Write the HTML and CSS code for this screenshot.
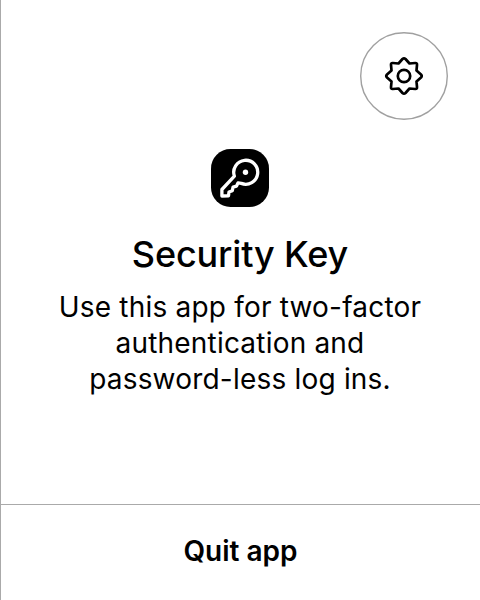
FILE: index.html
```
<!DOCTYPE html>
<html lang="en">
<head>
<meta charset="utf-8">
<title>Security Key</title>
<link rel="stylesheet" href="styles.css">
</head>
<body>
<main class="app">
  <header class="toolbar">
    <button class="settings" aria-label="Settings">
      <svg width="88" height="88" viewBox="-44 -44 88 88" fill="none" stroke="#000" stroke-width="2.7" stroke-linejoin="round" stroke-linecap="round">
        <circle class="ring" r="43.3"/>
        <path d="M-1.5-17Q0-18.4 1.5-17L5.5-12.5L11.2-13Q13.2-13.2 13-11.2L12.5-5.5L17-1.5Q18.4 0 17 1.5L12.5 5.5L13 11.2Q13.2 13.2 11.2 13L5.5 12.5L1.5 17Q0 18.4-1.5 17L-5.5 12.5L-11.2 13Q-13.2 13.2-13 11.2L-12.5 5.5L-17 1.5Q-18.4 0-17-1.5L-12.5-5.5L-13-11.2Q-13.2-13.2-11.2-13L-5.5-12.5Z"/>
        <circle r="6.2"/>
      </svg>
    </button>
  </header>
  <section class="intro">
    <svg class="logo" width="58" height="58" viewBox="0 0 58 58">
      <rect width="58" height="58" rx="19.5"/>
      <path d="M23.4 27.2A12 12 0 1 1 30.3 34.4L27 33.8L25.5 37.2L22 38.2L21.3 41.8L18 43L17.5 46.8L10.9 47V40.5Z" fill="none" stroke="#fff" stroke-width="3.3" stroke-linejoin="round"/>
      <circle cx="34.5" cy="23.3" r="2.7" fill="#fff"/>
    </svg>
    <h1 class="title">Security Key</h1>
    <p class="text">Use this app for two-factor<br>authentication and<br>password-less log ins.</p>
  </section>
  <button class="quit">Quit app</button>
</main>
</body>
</html>
```

FILE: styles.css
```
* { box-sizing: border-box; }
body {
  margin: 0;
  background: #fff;
  color: #000;
  font-family: Inter, sans-serif;
}
.app {
  display: flex;
  flex-direction: column;
  width: 480px;
  height: 600px;
  border-left: 1px solid #aaa;
}
.toolbar {
  display: flex;
  justify-content: flex-end;
  padding: 32px 32px 0;
}
.settings {
  display: flex;
  width: 88px;
  height: 88px;
  padding: 0;
  border: 0;
  background: none;
}
.ring {
  stroke: #a0a0a0;
  stroke-width: 1.4;
}
.intro {
  display: flex;
  flex: 1;
  flex-direction: column;
  align-items: center;
  padding-top: 29px;
  margin-left: -1px;
  text-align: center;
}
.logo { display: block; }
.title {
  margin: 25px 0 0;
  font-size: 36px;
  font-weight: 500;
  line-height: 44px;
  letter-spacing: -0.15px;
}
.text {
  margin: 13px 0 0;
  font-size: 28px;
  font-weight: 400;
  line-height: 36px;
  letter-spacing: 0.2px;
}
.quit {
  height: 96px;
  padding: 0 0 3px;
  border: 0;
  border-top: 1px solid #aaa;
  background: none;
  color: inherit;
  font: 600 28px/36px Inter, sans-serif;
}
```
